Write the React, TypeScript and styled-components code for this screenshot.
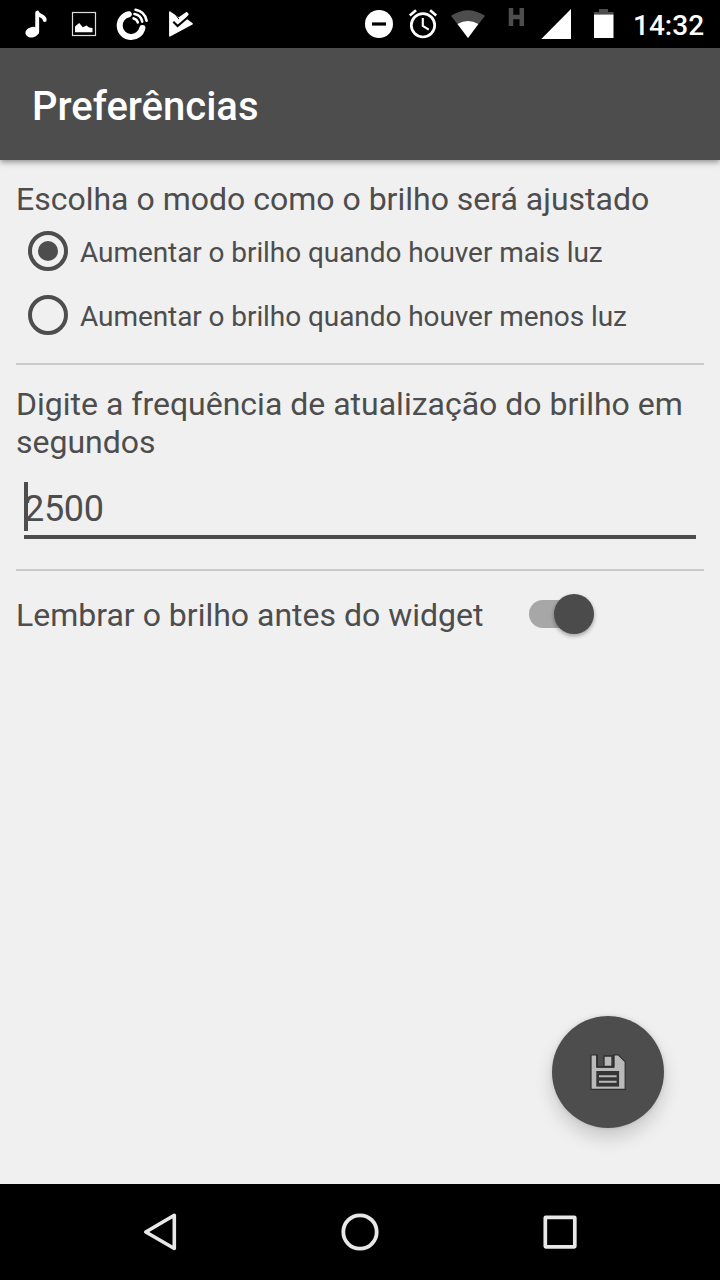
import React from 'react';
import styled, { createGlobalStyle } from 'styled-components';

const ink = '#4d4d4d';

const GlobalStyle = createGlobalStyle`
  *, *::before, *::after { box-sizing: border-box; }
  body { margin: 0; background: #f0f0f0; }
  h1, h2, p { margin: 0; font-weight: 400; }
`;

const Screen = styled.div`
  display: flex;
  flex-direction: column;
  width: 720px;
  height: 1280px;
  background: #f0f0f0;
  color: ${ink};
  font-family: Roboto, sans-serif;
  overflow: hidden;
`;

const StatusBar = styled.header`
  display: flex;
  justify-content: space-between;
  height: 48px;
  padding: 0 16px 0 12px;
  background: #000;
  color: #fff;
`;

const StatusGroup = styled.div`
  display: flex;
`;

const StatusIcon = styled.svg<{ $width: number }>`
  display: block;
  width: ${({ $width }) => $width}px;
  height: 48px;
`;

const Clock = styled.span`
  width: 71px;
  font-size: 28px;
  font-weight: 500;
  line-height: 52px;
  white-space: nowrap;
`;

const AppBar = styled.div`
  z-index: 1;
  display: flex;
  align-items: center;
  height: 112px;
  padding: 6px 32px 0;
  background: ${ink};
  box-shadow: 0 2px 6px rgba(0, 0, 0, 0.42);
`;

const Title = styled.h1`
  color: #fff;
  font-size: 40px;
  font-weight: 500;
  line-height: 48px;
`;

const Content = styled.main`
  position: relative;
  flex: 1;
  padding: 20px 16px 0;
`;

const Heading = styled.h2`
  font-size: 32px;
  line-height: 38px;
`;

const Divider = styled.div`
  height: 2px;
  background: #cacaca;
`;

const RadioGroup = styled.div`
  display: flex;
  flex-direction: column;
  margin: 1px 0 16px;
`;

const RadioRow = styled.label`
  display: flex;
  align-items: center;
  gap: 12px;
  height: 64px;
  padding-left: 12px;
`;

const RadioMark = styled.span<{ $checked?: boolean }>`
  display: flex;
  align-items: center;
  justify-content: center;
  width: 40px;
  height: 40px;
  border: 4px solid ${ink};
  border-radius: 50%;

  &::after {
    content: '';
    width: 20px;
    height: 20px;
    border-radius: 50%;
    background: ${({ $checked }) => ($checked ? ink : 'transparent')};
  }
`;

const RadioLabel = styled.span`
  padding-top: 4px;
  font-size: 28px;
  letter-spacing: -0.075px;
  line-height: 34px;
`;

const FrequencySection = styled.section`
  padding: 20px 0 30px;
`;

const NumberField = styled.div`
  position: relative;
  height: 57px;
  margin: 21px 8px 0;
  padding-top: 6px;
  border-bottom: 4px solid ${ink};
  font-size: 36px;
  letter-spacing: -0.3px;
  line-height: 42px;
`;

const Caret = styled.span`
  position: absolute;
  top: 0;
  left: 0;
  width: 4px;
  height: 49px;
  background: ${ink};
`;

const SwitchRow = styled.section`
  display: flex;
  align-items: center;
  height: 86px;
`;

const SwitchLabel = styled(Heading)`
  width: 513px;
  padding-top: 2px;
`;

const SwitchTrack = styled.span`
  display: flex;
  align-items: center;
  justify-content: flex-end;
  width: 65px;
  height: 28px;
  background: linear-gradient(to right, #a7a7a7 50px, transparent 50px);
  border-radius: 14px;
`;

const SwitchThumb = styled.span`
  flex: none;
  width: 40px;
  height: 40px;
  border-radius: 50%;
  background: #4b4b4b;
  box-shadow: 0 2px 4px rgba(0, 0, 0, 0.35);
`;

const SaveButton = styled.button`
  position: absolute;
  right: 56px;
  bottom: 56px;
  width: 112px;
  height: 112px;
  padding: 0;
  border: 0;
  border-radius: 50%;
  background: ${ink};
  box-shadow: 0 10px 18px rgba(0, 0, 0, 0.16), 0 0 4px rgba(0, 0, 0, 0.12);

  svg { display: block; width: 112px; height: 112px; }
`;

const NavBar = styled.nav`
  display: flex;
  align-items: center;
  justify-content: center;
  gap: 104px;
  height: 96px;
  background: #000;

  svg { display: block; width: 96px; height: 96px; }
`;

export default function App() {
  return (
    <>
      <GlobalStyle />
      <Screen>
        <StatusBar>
          <StatusGroup>
            <StatusIcon $width={48} viewBox="12 0 48 48">
              <ellipse cx="32.2" cy="32.2" rx="6.9" ry="5.2" transform="rotate(-14 32.2 32.2)" fill="#fff" />
              <path d="M37.2 32V12.8M37.3 12.5C38.5 16.2 44.8 15.5 44.7 20" fill="none" stroke="#fff" strokeWidth="3.9" strokeLinecap="round" strokeLinejoin="round" />
            </StatusIcon>
            <StatusIcon $width={48} viewBox="60 0 48 48">
              <rect x="72.5" y="12.5" width="23" height="23" fill="none" stroke="#ddd" strokeWidth="1.2" />
              <path d="M75 32.3V26.6L79.2 23l3.6 4.2 3.7-1.6 2.6 2 3.4.3v4.4z" fill="#fff" />
            </StatusIcon>
            <StatusIcon $width={48} viewBox="108 0 48 48">
              <path d="M128.8 14.2A11.5 11.5 0 1 0 142.4 28" fill="none" stroke="#fff" strokeWidth="6" strokeLinecap="round" />
              <path d="M133.6 18.4Q137 19.2 137.8 22.4M134.5 14Q140.9 15 142.2 21.6M135.6 9.7Q145 11.4 146.6 20.8" fill="none" stroke="#fff" strokeWidth="2.6" strokeLinecap="round" />
            </StatusIcon>
            <StatusIcon $width={48} viewBox="156 0 48 48">
              <path d="M169.8 12 178.8 18 186.7 12.7 188 14.2 184.8 18.2 192.2 23.8 169.8 36z" fill="#fff" stroke="#fff" strokeWidth="1.4" strokeLinejoin="round" />
              <path d="M173.3 21.7 177.6 26 188.5 16.7" fill="none" stroke="#000" strokeWidth="2.1" />
              <path d="M176 15.2 179 19.2" stroke="#000" strokeWidth="1" />
            </StatusIcon>
          </StatusGroup>
          <StatusGroup>
            <StatusIcon $width={42} viewBox="358 0 42 48">
              <circle cx="379" cy="24" r="14" fill="#fff" />
              <path d="M372 24h14" stroke="#000" strokeWidth="3.2" />
            </StatusIcon>
            <StatusIcon $width={46} viewBox="400 0 46 48">
              <circle cx="423" cy="25.3" r="11.7" fill="none" stroke="#fff" strokeWidth="2.7" />
              <path d="M422.8 18v8l6 3.6" fill="none" stroke="#fff" strokeWidth="2.1" />
              <path d="m409.8 15.5 6.2-5.2m14.1 0 6.1 5.2" stroke="#fff" strokeWidth="2.7" />
            </StatusIcon>
            <StatusIcon $width={46} viewBox="446 0 46 48">
              <path d="M451 15.8Q468 4.5 485 15.8L468 38z" fill="#4d4d4d" />
              <path d="M457.5 24Q468 18.2 478.3 24L468 38z" fill="#fff" />
            </StatusIcon>
            <StatusIcon $width={42} viewBox="492 0 42 48">
              <path d="M511 8v18m10.8-18v18m-10.8-9h10.8" fill="none" stroke="#4d4d4d" strokeWidth="4.5" />
            </StatusIcon>
            <StatusIcon $width={46} viewBox="534 0 46 48">
              <path d="M541.3 39 571 9v30z" fill="#fff" />
            </StatusIcon>
            <StatusIcon $width={53} viewBox="580 0 53 48">
              <path d="M594 14.5V12h5V9h9v3h5.5v2.5z" fill="#4d4d4d" />
              <path d="M594 14.5h19.5V38H594z" fill="#fff" />
            </StatusIcon>
            <Clock>14:32</Clock>
          </StatusGroup>
        </StatusBar>
        <AppBar>
          <Title>Preferências</Title>
        </AppBar>
        <Content>
          <Heading>Escolha o modo como o brilho será ajustado</Heading>
          <RadioGroup>
            <RadioRow>
              <RadioMark $checked />
              <RadioLabel>Aumentar o brilho quando houver mais luz</RadioLabel>
            </RadioRow>
            <RadioRow>
              <RadioMark />
              <RadioLabel>Aumentar o brilho quando houver menos luz</RadioLabel>
            </RadioRow>
          </RadioGroup>
          <Divider />
          <FrequencySection>
            <Heading>Digite a frequência de atualização do brilho em segundos</Heading>
            <NumberField>
              2500
              <Caret />
            </NumberField>
          </FrequencySection>
          <Divider />
          <SwitchRow>
            <SwitchLabel>Lembrar o brilho antes do widget</SwitchLabel>
            <SwitchTrack>
              <SwitchThumb />
            </SwitchTrack>
          </SwitchRow>
          <SaveButton aria-label="Salvar">
            <svg viewBox="552 1016 112 112">
              <path d="M591 1054.8H597V1067H613.7V1054.8H618.2L625.2 1061.8V1089.4H591z" fill="#b9b9b9" stroke="#2d2d2d" strokeWidth="1.2" strokeLinejoin="round" />
              <path d="M597 1054.8V1067h16.7v-12.2" fill="none" stroke="#2d2d2d" strokeWidth="1.5" />
              <path d="M604 1056h8v10.5h-8z" fill="#b9b9b9" stroke="#2d2d2d" strokeWidth="1.3" />
              <path d="M596.3 1071h22.8v15.6h-22.8z" fill="#343434" />
              <path d="M599 1076.3h17.6M599 1081.8h17.6" stroke="#b9b9b9" strokeWidth="2.1" />
            </svg>
          </SaveButton>
        </Content>
        <NavBar>
          <svg viewBox="112 1184 96 96">
            <path d="M174.3 1215.3V1248.5L145.8 1232z" fill="none" stroke="#e8e8e8" strokeWidth="3.6" strokeLinejoin="round" />
          </svg>
          <svg viewBox="312 1184 96 96">
            <circle cx="360" cy="1232" r="16.7" fill="none" stroke="#e8e8e8" strokeWidth="3.8" />
          </svg>
          <svg viewBox="512 1184 96 96">
            <rect x="545.3" y="1217.3" width="29.5" height="29.5" rx="0.5" fill="none" stroke="#e8e8e8" strokeWidth="3.7" strokeLinejoin="round" />
          </svg>
        </NavBar>
      </Screen>
    </>
  );
}
